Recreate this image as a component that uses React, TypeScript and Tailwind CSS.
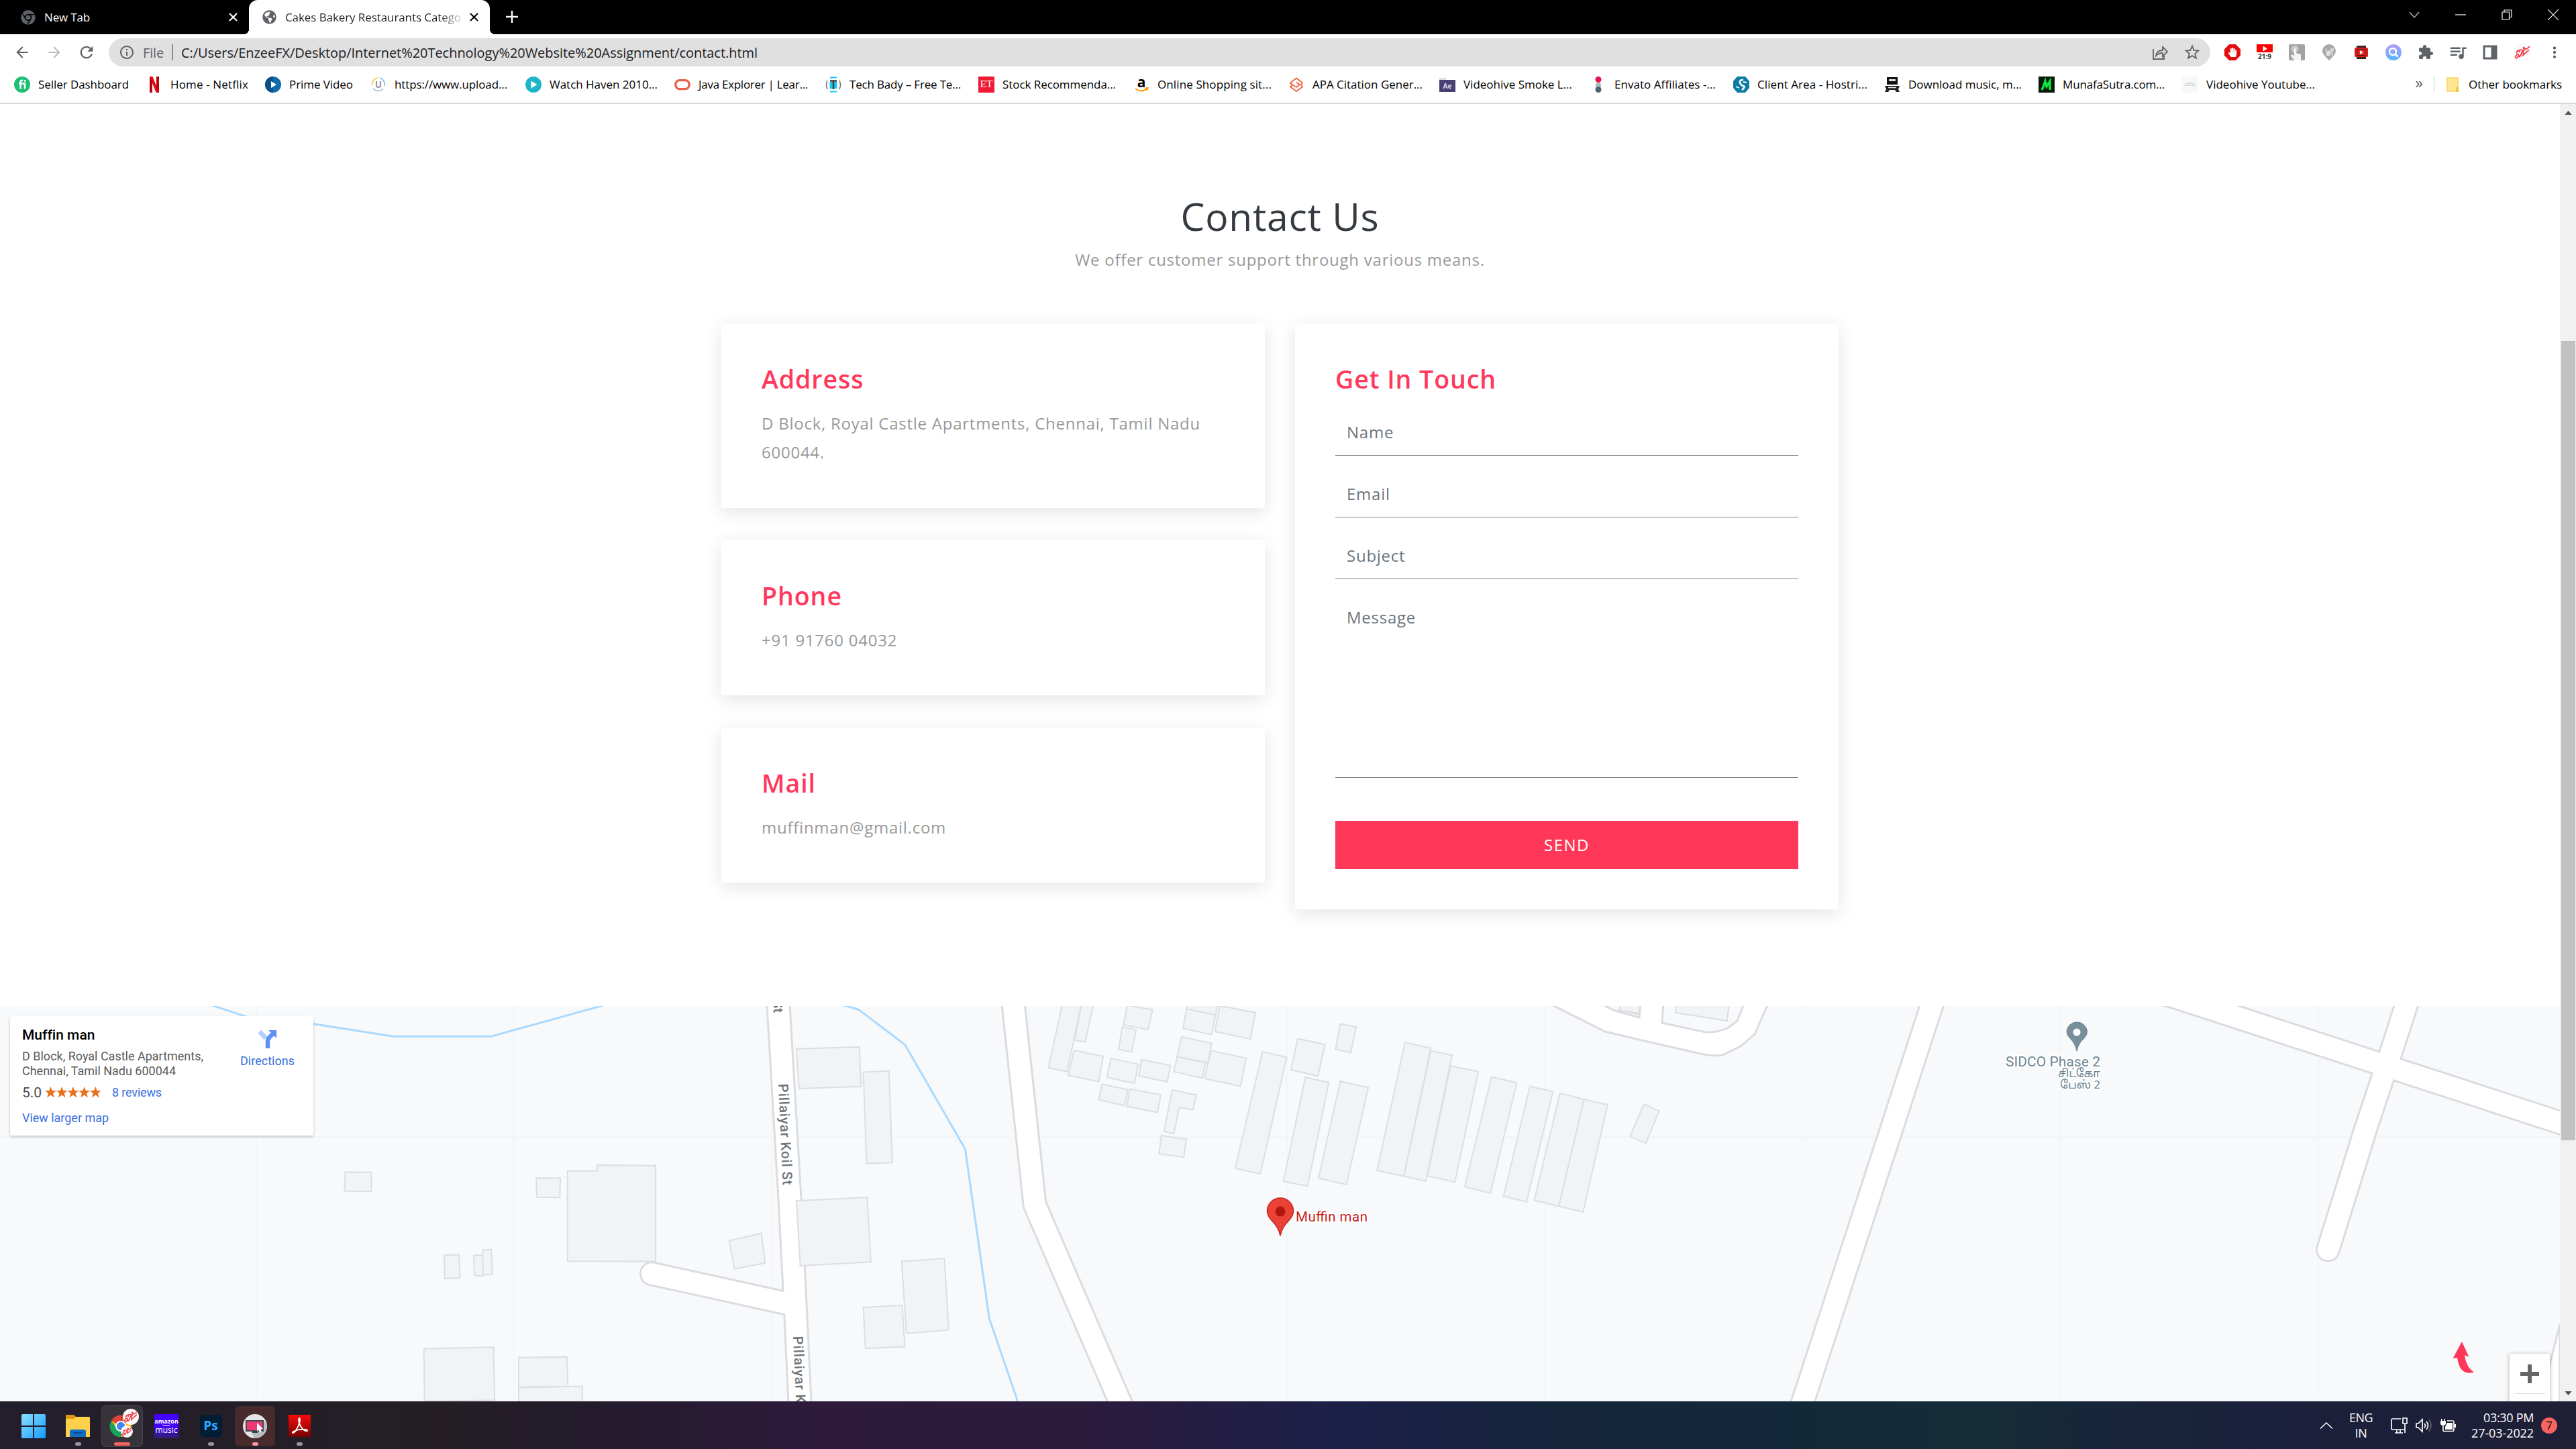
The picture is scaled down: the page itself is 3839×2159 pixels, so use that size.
import React, { useLayoutEffect, useRef } from "react";
import { FaCat, FaChrome, FaGlobeAmericas, FaHandPaper, FaPlay } from "react-icons/fa";
import { MdExtension, MdQueueMusic, MdStarBorder, MdInfoOutline, MdArrowBack, MdArrowForward, MdRefresh, MdMoreVert } from "react-icons/md";

const UI = "font-['Open_Sans',sans-serif]";

/* Text whose tracking is adjusted so that the run fills a given width. */
function Fit({ w, className = "", children }: { w: number; className?: string; children: string }) {
  const ref = useRef<HTMLSpanElement>(null);
  useLayoutEffect(() => {
    const el = ref.current;
    if (!el) return;
    el.style.letterSpacing = "0px";
    const natural = el.getBoundingClientRect().width;
    el.style.letterSpacing = `${(w - natural) / children.length}px`;
  }, [w, children]);
  return (
    <span ref={ref} className={`inline-block whitespace-nowrap ${className}`}>
      {children}
    </span>
  );
}

/* ---------- bookmark icons ---------- */

const Svg = ({ children }: { children: React.ReactNode }) => (
  <svg viewBox="0 0 24 24" className="size-6 shrink-0">{children}</svg>
);

const icons: Record<string, React.ReactNode> = {
  fi: (
    <Svg>
      <circle cx="12" cy="12" r="12" fill="#1dbf73" />
      <path d="M7 10.5h9v8M9.5 18.5V8.5q0-3 3.5-2.7" fill="none" stroke="#fff" strokeWidth="2.6" />
      <circle cx="16" cy="6.5" r="1.5" fill="#fff" />
    </Svg>
  ),
  netflix: (
    <Svg>
      <path d="M5 0h4v24l-4 0z" fill="#b1060f" />
      <path d="M15 0h4v24h-4z" fill="#b1060f" />
      <path d="M5 0h4.4L19 24h-4.4z" fill="#e50914" />
    </Svg>
  ),
  prime: (
    <Svg>
      <circle cx="12" cy="12" r="12" fill="#0f6cad" />
      <path d="M12 0a12 12 0 0 0 0 24z" fill="#0d4f8b" />
      <path d="M9 7l8 5-8 5z" fill="#fff" />
    </Svg>
  ),
  upload: (
    <Svg>
      <path d="M11 2a10 10 0 0 0-8.5 11" fill="none" stroke="#f4c542" strokeWidth="1.6" />
      <path d="M14 2a10 10 0 0 1 7 12" fill="none" stroke="#7fb2e5" strokeWidth="1.6" />
      <path d="M4 18a10 10 0 0 0 15 0" fill="none" stroke="#a5bdd6" strokeWidth="1.6" />
      <path d="M9 7v6q0 3 3 3t3-3V7" fill="none" stroke="#9a9a9a" strokeWidth="2.2" />
    </Svg>
  ),
  watch: (
    <Svg>
      <circle cx="12" cy="12" r="12" fill="#1fb5c9" />
      <path d="M8.5 6.5l9 5.5-9 5.5z" fill="#fff" />
    </Svg>
  ),
  java: (
    <Svg>
      <rect x="1.8" y="5.6" width="20.4" height="13" rx="6" fill="none" stroke="#e8604c" strokeWidth="3.4" />
    </Svg>
  ),
  tech: (
    <Svg>
      <path d="M7 1.500h10M7 22.500h10M7.500 9h3v8h-3zM13.500 9h3v8h-3z" stroke="#19c8f5" strokeWidth="2" fill="#19c8f5" />
      <path d="M7 6.500h10M12 6v13" stroke="#3d3d3d" strokeWidth="2.400" />
      <path d="M3 6q-3 6 0 13M21 6q3 6 0 13" fill="none" stroke="#777" strokeWidth="1.600" />
    </Svg>
  ),
  et: (
    <div className="flex size-6 shrink-0 items-center justify-center bg-[#ed1b34] font-['Liberation_Serif',serif] text-[15px] leading-none text-white">ET</div>
  ),
  amazon: (
    <span className="relative flex size-6 shrink-0 items-center justify-center">
      <span className="absolute inset-x-0 -top-[3px] text-center text-[21px] leading-[22px] font-bold text-black">a</span>
      <svg viewBox="0 0 24 24" className="absolute inset-0 size-6">
        <path d="M3 18q9 6.500 17 .5M17.500 17.500l4-.5-1 4" fill="none" stroke="#ff9900" strokeWidth="2" />
      </svg>
    </span>
  ),
  apa: (
    <Svg>
      <path d="M12 2.500l9 7-2 3 2 3-9 6.500-9-6.500 3-3-3-3z" fill="none" stroke="#f0613b" strokeWidth="1.800" strokeLinejoin="round" />
      <path d="M6 12l6 4 5-4-5-3.500" fill="none" stroke="#f0613b" strokeWidth="1.800" />
    </Svg>
  ),
  ae: (
    <div className="relative mt-1 flex h-[18px] w-6 shrink-0 items-center justify-center bg-[#4a4070] text-[10px] leading-none font-bold text-[#ddd7ee]">
      <span className="absolute -top-[3px] left-0 h-[3px] w-2.5 bg-[#dedee6]" />Ae
    </div>
  ),
  envato: (
    <Svg>
      <circle cx="12" cy="4.500" r="4.500" fill="#ea1150" />
      <circle cx="12" cy="13" r="4" fill="#a9b7be" />
      <circle cx="12" cy="19.500" r="4.500" fill="#4c6470" />
    </Svg>
  ),
  client: (
    <Svg>
      <path d="M6 0h12l6 7v10l-6 7H6l-6-7V7z" fill="#0d7ba3" />
      <path d="M15 5q-6 0-5 4t5 5-2 6" fill="none" stroke="#fff" strokeWidth="2.600" />
      <path d="M4 15l5 2M20 9l-5-1" stroke="#fff" strokeWidth="1.800" />
    </Svg>
  ),
  music: (
    <Svg>
      <path d="M4 1h16v11H4z" fill="#111" />
      <path d="M7 4h10v3H7z" fill="#ddd" />
      <path d="M1 14h22l-2 5 2 4h-5l-2-3H8l-2 3H1l2-4z" fill="#222" />
      <path d="M6 16.500h12" stroke="#eee" strokeWidth="1.500" />
    </Svg>
  ),
  munafa: (
    <Svg>
      <path d="M0 0h24v24H0z" fill="#071a09" />
      <path d="M5 20q2-4 5-13l2 8 5-8 0 13" fill="none" stroke="#15e53c" strokeWidth="3.400" />
    </Svg>
  ),
  blank: (
    <Svg>
      <path d="M0 0h24v24H0z" fill="#f8f8f8" />
      <path d="M6 10h12M3 13h18" stroke="#d2d2d2" strokeWidth="1.500" />
    </Svg>
  ),
};

const bookmarks: [string, string, number, string][] = [
  ["fi", "Seller Dashboard", 135, "w-[197px]"],
  ["netflix", "Home - Netflix", 116, "w-[177px]"],
  ["prime", "Prime Video", 95, "w-[157px]"],
  ["upload", "https://www.upload...", 168, "w-[231px]"],
  ["watch", "Watch Haven 2010...", 161, "w-[222px]"],
  ["java", "Java Explorer | Lear...", 163, "w-[225px]"],
  ["tech", "Tech Bady – Free Te...", 166, "w-[228px]"],
  ["et", "Stock Recommenda...", 169, "w-[231px]"],
  ["amazon", "Online Shopping sit...", 170, "w-[231px]"],
  ["apa", "APA Citation Gener...", 164, "w-[225px]"],
  ["ae", "Videohive Smoke L...", 162, "w-[225px]"],
  ["envato", "Envato Affiliates -...", 151, "w-[213px]"],
  ["client", "Client Area - Hostri...", 164, "w-[225px]"],
  ["music", "Download music, m...", 169, "w-[230px]"],
  ["munafa", "MunafaSutra.com...", 152, "w-[214px]"],
  ["blank", "Videohive Youtube...", 162, "w-[220px]"],
];

function TabClose({ className }: { className: string }) {
  return (
    <svg viewBox="0 0 14 14" className={`size-[13px] shrink-0 ${className}`}>
      <path d="M1 1l12 12M13 1L1 13" stroke="currentColor" strokeWidth="2.200" />
    </svg>
  );
}

function TabStrip() {
  return (
    <div className="flex h-[51px] shrink-0 bg-black text-[17px]">
      <div className="flex w-[371px] items-center pl-[31px] text-white">
        <FaChrome className="size-[22px] text-[#5f6368]" />
        <Fit w={68} className="ml-[13px]">New Tab</Fit>
        <TabClose className="ml-[207px] text-white" />
      </div>
      <div className="relative flex w-[359px] items-center rounded-t-[13px] bg-white pl-5 text-black">
        <span className="absolute bottom-0 -left-2 h-2 w-2 bg-[radial-gradient(circle_at_0_0,black_8px,white_8px)]" />
        <span className="absolute -right-2 bottom-0 h-2 w-2 bg-[radial-gradient(circle_at_100%_0,black_8px,white_8px)]" />
        <FaGlobeAmericas className="size-[21px] shrink-0 text-[#5f6368]" />
        <Fit w={262} className="ml-[13px] bg-[linear-gradient(90deg,#202124_88%,#d8d8d8_100%)] bg-clip-text text-transparent">Cakes Bakery Restaurants Catego</Fit>
        <TabClose className="ml-[13px] text-black" />
      </div>
      <svg viewBox="0 0 18 18" className="mt-4 ml-6 size-[18px]">
        <path d="M9 0v18M0 9h18" stroke="#fff" strokeWidth="2.400" />
      </svg>
      <div className="mr-[26px] ml-auto flex h-[43px] items-center gap-[53px] text-white">
        <svg viewBox="0 0 16 16" className="size-4"><path d="M1 4l7 8 7-8" fill="none" stroke="#bbb" strokeWidth="1.200" /></svg>
        <svg viewBox="0 0 16 16" className="size-4"><path d="M0 8h16" stroke="#fff" strokeWidth="1.200" /></svg>
        <svg viewBox="0 0 16 16" className="size-4"><path d="M1 4h10.500v11H1zM4 4V1h11v10.500h-3.500" fill="none" stroke="#fff" strokeWidth="1.200" /></svg>
        <svg viewBox="0 0 16 16" className="size-4"><path d="M0 0l16 16M16 0L0 16" stroke="#fff" strokeWidth="1.200" /></svg>
      </div>
    </div>
  );
}

function Signature({ className }: { className: string }) {
  return (
    <svg viewBox="0 0 24 24" className={className}>
      <circle cx="12" cy="12" r="12" fill="#fbf9f9" />
      <path d="M4 13q3-7 4-1 0-5 4-3t2-2 3 1l5-4M2 19q4-8 5-3t4-3 2 3l4-4 4-3M3 21l5-5" fill="none" stroke="#f0383f" strokeWidth="1.600" />
    </svg>
  );
}

function Toolbar() {
  return (
    <div className="flex h-[54px] shrink-0 items-center text-[#5f6368]">
      <MdArrowBack className="ml-[20px] size-[26px]" />
      <MdArrowForward className="ml-[22px] size-[26px] text-[#bdbdbd]" />
      <MdRefresh className="ml-[21px] size-[28px]" />
      <div className="ml-[19px] flex h-[42px] w-[3132px] items-center rounded-full bg-[#e0e0e0] text-[20px]">
        <MdInfoOutline className="ml-[15px] size-[24px]" />
        <Fit w={31} className="ml-[12px] pt-[2px]">File</Fit>
        <span className="mx-[12px] h-6 w-[2px] bg-[#8b8b8b]" />
        <Fit w={859} className="pt-[2px] text-[#202124]">C:/Users/EnzeeFX/Desktop/Internet%20Technology%20Website%20Assignment/contact.html</Fit>
        <svg viewBox="0 0 24 24" className="mr-px ml-auto size-6">
          <path d="M2 7v15h16v-5M6 17q1-8 10-8V4l7 7-7 7v-5q-6 0-10 4z" fill="none" stroke="#5f6368" strokeWidth="1.800" />
        </svg>
        <MdStarBorder className="mr-[13px] ml-[21px] size-[28px]" />
      </div>
      <div className="ml-[21px] flex items-center gap-6">
        <span className="flex size-6 items-center justify-center bg-[#e40d0d] text-[14px] text-white [clip-path:polygon(30%_0,70%_0,100%_30%,100%_70%,70%_100%,30%_100%,0_70%,0_30%)]"><FaHandPaper /></span>
        <span className="flex h-6 w-6 flex-col items-center">
          <span className="flex h-3 w-6 items-center justify-center bg-[#f00] text-[7px] text-white"><FaPlay /></span>
          <span className="text-[10px] leading-3 font-bold text-[#333]">21:9</span>
        </span>
        <svg viewBox="0 0 24 24" className="size-6">
          <rect width="24" height="24" rx="2" fill="#a2a2a2" />
          <circle cx="9" cy="7" r="5.500" fill="#c9c9c9" />
          <path d="M8 7q2-2 3 0v6l7 2v9H8l-5-7 1-2 4 2z" fill="#eef4f8" />
        </svg>
        <span className="relative flex size-6 justify-center">
          <svg viewBox="0 0 24 24" className="absolute inset-0 size-6"><path d="M12 24q-10-9-10-14a10 10 0 0 1 20 0q0 5-10 14z" fill="#a8a8a8" /></svg>
          <FaCat className="relative mt-[4px] size-[13px] text-[#e0e0e0]" />
        </span>
        <svg viewBox="0 0 24 24" className="size-6">
          <path d="M5 2h14v20H5z" fill="#3a2522" />
          <rect x="2" y="5" width="20" height="14" rx="2" fill="#d91c1c" />
          <path d="M6 7.500h12v9H6z" fill="#e22" stroke="#5a1212" />
          <path d="M10 9l5 3-5 3z" fill="#fff" />
        </svg>
        <svg viewBox="0 0 24 24" className="size-6">
          <defs><linearGradient id="q" x2="0" y2="1"><stop stopColor="#b49cf7" /><stop offset="1" stopColor="#57b5ff" /></linearGradient></defs>
          <circle cx="12" cy="12" r="12" fill="url(#q)" />
          <circle cx="11" cy="11" r="5" fill="none" stroke="#fff" strokeWidth="2.400" />
          <path d="M14.500 14.500l4 4" stroke="#fff" strokeWidth="2.600" />
        </svg>
        <MdExtension className="size-6" />
        <MdQueueMusic className="size-6 scale-125" />
        <svg viewBox="0 0 24 24" className="size-6"><path d="M3 3h18v18H3zM15 3v18M17 3v18M19 3v18" fill="none" stroke="#5f6368" strokeWidth="3" /></svg>
        <Signature className="size-6 scale-110" />
        <MdMoreVert className="size-6 scale-110" />
      </div>
    </div>
  );
}

function BookmarkBar() {
  return (
    <div className="flex h-[50px] shrink-0 items-center border-b-2 border-[#dadada] pb-[7px] pl-[21px] text-[17px] text-black">
      {bookmarks.map(([icon, label, w, cls]) => (
        <div key={label} className={`flex shrink-0 items-center gap-3 ${cls}`}>
          {icons[icon]}
          <Fit w={w}>{label}</Fit>
        </div>
      ))}
      <svg viewBox="0 0 12 10" className="ml-[128px] h-[9px] w-[11px]"><path d="M1 0l4 5-4 5M6 0l4 5-4 5" fill="none" stroke="#5f6368" strokeWidth="2" /></svg>
      <span className="ml-4 h-6 w-px bg-[#c8c8c8]" />
      <svg viewBox="0 0 18 24" className="ml-[18px] h-6 w-[18px]"><path d="M1 2h16v20H1z" fill="#ffe694" stroke="#f7d55c" strokeWidth="1.500" /><path d="M14 23v-7h4v7z" fill="#f2c53a" /></svg>
      <Fit w={139} className="ml-[15px]">Other bookmarks</Fit>
    </div>
  );
}

/* ---------- page ---------- */

function Card({ title, children, className = "" }: { title: string; children: React.ReactNode; className?: string }) {
  return (
    <section className={`w-[810px] bg-white px-[60px] pt-[60px] shadow-[0_6px_26px_rgba(0,0,0,0.11)] ${className}`}>
      <h4 className="text-[37.5px] leading-[45px] font-semibold tracking-[0.95px] text-[#ff385c]">{title}</h4>
      {children}
    </section>
  );
}

function Contact() {
  const p = "text-[24px] leading-[43.2px] tracking-[0.75px] text-[#999]";
  const field = "block w-full border-b border-[#808080] px-[17px] text-[24px] tracking-[0.75px] outline-none placeholder:text-[#6c757d] placeholder:opacity-100";
  return (
    <main className="flex h-[1344px] shrink-0 flex-col items-center bg-white pt-[131px]">
      <h1 className="text-[57px] leading-[72px] tracking-[0.75px] text-[#343a40]">Contact Us</h1>
      <p className={`mt-[7px] ${p}`}>We offer customer support through various means.</p>
      <div className="mt-[74px] flex w-[1665px] items-start justify-between">
        <div className="flex flex-col gap-12">
          <Card title="Address" className="pb-[61px]"><p className={`mt-[22px] ${p}`}>D Block, Royal Castle Apartments, Chennai, Tamil Nadu 600044.</p></Card>
          <Card title="Phone" className="pb-[61px]"><p className={`mt-[22px] ${p}`}>+91 91760 04032</p></Card>
          <Card title="Mail" className="pb-[61px]"><p className={`mt-[22px] ${p}`}>muffinman@gmail.com</p></Card>
        </div>
        <Card title="Get In Touch" className="h-[873px]">
          <form className="mt-6 flex flex-col">
            <input placeholder="Name" className={`mb-6 h-[68px] pb-[2px] ${field}`} />
            <input placeholder="Email" className={`mb-6 h-[68px] pb-[2px] ${field}`} />
            <input placeholder="Subject" className={`mb-6 h-[68px] pb-[2px] ${field}`} />
            <textarea placeholder="Message" className={`h-[272px] resize-none pt-[15px] ${field}`} />
            <button type="button" className="mt-16 h-[72px] bg-[#ff385a] text-[24px] tracking-[1.5px] text-white">SEND</button>
          </form>
        </Card>
      </div>
    </main>
  );
}

/* ---------- map ---------- */

const west = [
  "1454,190 1569,183 1572,337 1459,345", "630,670 678,671 678,745 629,744", "979,693 1023,694 1022,769 980,768",
  "1036,665 1090,665 1090,643 1197,645 1197,1018 1036,1017", "1331,937 1390,909 1397,1024 1341,1047",
  "811,994 838,992 840,1082 812,1085", "865,994 882,994 882,1075 866,1073", "881,973 897,971 899,1069 882,1070",
  "774,1358 901,1352 903,1558 775,1563", "947,1392 1035,1390 1037,1505 947,1507", "947,1509 1063,1504 1063,1580 947,1580",
  "1454,782 1583,768 1590,1020 1461,1035",
];
const middle = [
  "8,281 55,276 61,633 14,637", "78,1018 156,1006 164,1285 87,1298", "8,1197 79,1189 84,1350 12,1357",
  "372,10 407,10 380,279 346,264", "407,10 429,10 413,164 394,156", "490,20 536,38 528,116 483,96",
  "481,104 506,116 498,203 474,192", "393,196 446,219 438,318 382,293", "460,227 510,250 503,324 453,302",
  "516,232 569,255 563,319 511,295", "600,10 656,10 651,58 598,35", "598,35 651,58 644,135 592,110",
  "659,22 724,49 715,152 650,123", "589,143 644,169 637,245 581,221", "581,221 633,244 627,304 575,279",
  "643,197 707,226 697,336 631,306", "444,328 491,349 485,411 438,389", "495,346 551,369 545,438 489,414",
  "572,350 616,370 610,428 585,418 575,520 557,512", "552,528 598,542 593,612 548,599", "737,202 781,223 733,677 687,655",
  "801,150 851,173 838,296 789,272", "879,93 908,105 898,205 870,192", "815,301 858,321 819,725 775,706",
  "879,316 930,341 890,719 839,694", "997,165 1044,187 995,686 946,664", "1044,197 1083,215 1035,706 995,686",
  "1080,257 1131,279 1088,709 1038,685", "1155,299 1201,322 1153,752 1106,727", "1225,336 1267,356 1219,786 1177,764",
  "1280,363 1324,387 1278,803 1233,780", "1324,387 1367,408 1322,826 1278,803", "1433,406 1461,431 1437,557 1408,532",
];

const W = "translate(0,-9) scale(.8163,.38265)";
const M = "translate(1280,-9) scale(.8163,.38265)";
const E = "translate(2560,-9) scale(.8157,.38265)";

const roads: [string, string][] = [
  [W, "1420,-20L1442,780L1451,1150L1461,1600"],
  [W, "1190,1066L1451,1188"],
  [M, "280,-20L321,797L484,1600"],
  [E, "397,-20L150,1600"],
  [E, "820,-22L1600,520"],
  [E, "1264,-20L1223,250L1184,500L1115,972"],
];

const Roads = ({ color, width }: { color: string; width: number }) => (
  <>
    {roads.map(([t, d]) => (
      <path key={d} transform={t} d={`M${d}`} fill="none" stroke={color} strokeWidth={width} strokeLinecap="round" strokeLinejoin="round" vectorEffect="non-scaling-stroke" />
    ))}
  </>
);

const Blocks = ({ list, t }: { list: string[]; t: string }) => (
  <g transform={t} fill="#f1f3f4" stroke="#dcdee1" strokeWidth="2">
    {list.map((pts) => <polygon key={pts} points={pts} vectorEffect="non-scaling-stroke" />)}
  </g>
);

function MapCanvas() {
  return (
    <svg viewBox="0 0 3815 589" className="block h-[589px] w-[3815px]">
      <rect width="3815" height="589" fill="#f8f9fb" />
      <path d="M382 0v589M766 0v589M1150 0v589M1534 0v589M1918 0v589M2302 0v589M2686 0v589M3070 0v589M3455 0v589M0 195h3815M0 579h3815" stroke="#f2f4f5" strokeWidth="1.500" />
      <g fill="none" stroke="#aadaff" strokeWidth="3">
        <path transform={W} d="M386,20L450,65L572,93L718,142L896,142L1100,22M1540,20L1568,38" vectorEffect="non-scaling-stroke" />
        <path transform={M} d="M-28,20L0,38L84,174L194,580L238,1240L296,1600" vectorEffect="non-scaling-stroke" />
      </g>
      <path d="M3815 474L3801 529L3788 600H3815z" fill="#fff" stroke="#dadce0" strokeWidth="3" />
      <Blocks list={middle} t={M} />
      <g fill="#f1f3f4" stroke="#dcdee1" strokeWidth="2">
        <path d="M2416-5L2413 6L2460 14L2463-5zM2498-5L2497 10L2574 22L2577-5z" />
      </g>
      <Roads color="#dadce0" width={37} />
      <path d="M2304-6L2392 38L2455 53L2539 72Q2556 75 2567 73L2594 60L2615 42L2636-6H2600L2589 22L2576 32Q2560 40 2542 39L2477 25L2479-6H2445L2443 17L2407 7L2380-6Z" fill="#fff" stroke="#dadce0" strokeWidth="3" />
      <path d="M2416-5L2413 6L2443 13" fill="none" stroke="#dcdee1" strokeWidth="2" />
      <Roads color="#fff" width={31} />
      <Blocks list={west} t={W} />
      <g className="font-['Roboto',sans-serif]" fontSize="20.500" fontWeight="500" fill="#70757a" stroke="#fff" strokeWidth="3" paintOrder="stroke">
        <text transform="translate(1160,116) rotate(87.5)" textLength="151">Pillaiyar Koil St</text>
        <text transform="translate(1182,492) rotate(87.5)" textLength="151">Pillaiyar Koil St</text>
        <text transform="translate(1152,-9) rotate(87.5)">St</text>
      </g>
      <path d="M1908 342Q1905.500 330 1896.500 321Q1888.500 313 1888.500 305.500A19.500 19.500 0 0 1 1927.500 305.500Q1927.500 313 1919.500 321Q1910.500 330 1908 342z" fill="#ea4335" stroke="#c5221f" strokeWidth="1.500" />
      <circle cx="1908" cy="306" r="7.500" fill="#b31412" />
      <g className="font-['Roboto',sans-serif]" stroke="#fff" strokeWidth="4" paintOrder="stroke">
        <text x="1931" y="321" fontSize="20.500" textLength="107" fill="#c5221f">Muffin man</text>
        <text x="2989" y="90" fontSize="21" textLength="141" fill="#6b8591">SIDCO Phase 2</text>
        <g fontSize="17" textAnchor="end" fill="#6b8591" className="font-['Noto_Sans_Tamil','Noto_Sans',sans-serif]">
          <text x="3130" y="106" textLength="63" lengthAdjust="spacingAndGlyphs">சிட்கோ</text>
          <text x="3130" y="123" textLength="60" lengthAdjust="spacingAndGlyphs">பேஸ் 2</text>
        </g>
      </g>
      <path d="M3095 67Q3093 56 3085 48Q3080 43 3080 38A15.300 15.300 0 0 1 3110.500 38Q3110.500 43 3105 49Q3097 56 3095 67z" fill="#78909c" stroke="#5f7b88" />
      <circle cx="3095" cy="39" r="5.500" fill="#fff" />
      <path d="M3669 500L3679.500 523L3673 520Q3675 538 3687 545.500Q3666 552 3662 524L3655.500 525Z" fill="#ff385a" />
    </svg>
  );
}

function MapSection() {
  return (
    <div className="relative h-[589px] overflow-hidden font-['Roboto',sans-serif]">
      <MapCanvas />
      <div className="absolute top-[15px] left-[15px] flex h-[178px] w-[452px] justify-between rounded-[3px] bg-white pt-[15px] pr-[28px] pl-[18px] shadow-[0_2px_4px_rgba(0,0,0,0.2)]">
        <div className="flex flex-col items-start text-[18px] leading-[22px] text-[#5b5b5b]">
          <Fit w={107} className="mb-[8px] text-[21px] leading-[26px] font-medium text-black">Muffin man</Fit>
          <Fit w={270}>D Block, Royal Castle Apartments,</Fit>
          <Fit w={229}>Chennai, Tamil Nadu 600044</Fit>
          <div className="mt-[10px] flex items-center">
            <Fit w={29} className="mr-[5px] text-[21px] text-[#4d4d4d]">5.0</Fit>
            <svg viewBox="0 0 84 18" className="h-[18px] w-[84px]">
              {[0, 1, 2, 3, 4].map((i) => (
                <path key={i} transform={`translate(${i * 16.7},0)`} d="M8.500 0l2.200 6h6.300l-5 4 1.900 6.500-5.400-4-5.400 4L5 10 0 6h6.300z" fill="#e7711b" />
              ))}
            </svg>
            <Fit w={74} className="ml-[16px] text-[#3a70dd]">8 reviews</Fit>
          </div>
          <Fit w={129} className="mt-[16px] text-[#3a70dd]">View larger map</Fit>
        </div>
        <div className="flex flex-col items-center pt-[5px]">
          <svg viewBox="0 0 28 28" className="size-7">
            <path d="M2 3l9 10" stroke="#b5cdfd" strokeWidth="7" />
            <path d="M14 28V17q0-3 3-6l6-6" fill="none" stroke="#5e8ff5" strokeWidth="6.500" />
            <path d="M15 1h12v12z" fill="#5e8ff5" />
          </svg>
          <Fit w={81} className="mt-2 text-[18px] leading-[22px] text-[#3a70dd]">Directions</Fit>
        </div>
      </div>
      <div className="absolute top-[518px] left-[3740px] flex h-[90px] w-[60px] flex-col items-center rounded-[3px] bg-white shadow-[0_1px_6px_rgba(0,0,0,0.3)]">
        <svg viewBox="0 0 28 28" className="mt-4 size-7"><path d="M14 0v28M0 14h28" stroke="#666" strokeWidth="6" /></svg>
        <span className="mt-[15px] h-px w-[45px] bg-[#dedede]" />
      </div>
    </div>
  );
}

function Scrollbar() {
  return (
    <div className="flex w-6 shrink-0 flex-col items-center bg-[#f1f1f1]">
      <svg viewBox="0 0 12 7" className="mt-[10px] h-[6px] w-[11px]"><path d="M6 0l6 7H0z" fill="#505050" /></svg>
      <div className="mt-[337px] h-[1191px] w-[21px] bg-[#c1c1c1]" />
      <svg viewBox="0 0 12 7" className="mt-auto mb-[9px] h-[6px] w-[11px]"><path d="M6 7l6-7H0z" fill="#505050" /></svg>
    </div>
  );
}

/* ---------- taskbar ---------- */

function Slot({ children, mark = "", className = "" }: { children: React.ReactNode; mark?: string; className?: string }) {
  return (
    <div className={`flex h-[60px] w-[60px] shrink-0 flex-col items-center rounded-md ${className}`}>
      <div className="flex h-[54px] items-center justify-center pt-[6px]">{children}</div>
      {mark && <span className={`h-[5px] rounded-full ${mark}`} />}
    </div>
  );
}

function Taskbar() {
  return (
    <div className="flex h-[71px] shrink-0 items-center bg-[linear-gradient(90deg,#231e2c_0%,#241e24_17%,#231b2c_23%,#2d1a3c_32%,#2b1b3d_42%,#1c2048_52%,#15253c_60%,#12293a_70%,#152d38_77%,#17263a_81%,#1b203c_88%,#1f1f36_100%)] text-white">
      <div className="flex items-center gap-[6px] pt-[2px] pl-5">
        <Slot>
          <svg viewBox="0 0 36 36" className="size-[36px]">
            <defs><linearGradient id="win" x2="1" y2="1"><stop stopColor="#8be2ff" /><stop offset="1" stopColor="#159bfd" /></linearGradient></defs>
            <path d="M2 0h15v17H0V2q0-2 2-2zM19 0h15q2 0 2 2v15H19zM0 19h17v17H2q-2 0-2-2zM19 19h17v15q0 2-2 2H19z" fill="url(#win)" />
          </svg>
        </Slot>
        <Slot mark="w-[9px] bg-[#9c979d]">
          <svg viewBox="0 0 36 34" className="h-[34px] w-[36px]">
            <path d="M0 1q0-1 1-1h11l3 3v8H0z" fill="#dd9a0e" />
            <path d="M0 6h12l3-3h20q1 0 1 1v29H0z" fill="#ffd04b" />
            <path d="M6 33V25q0-3 3-3h18q3 0 3 3v8z" fill="#1170c4" />
            <path d="M11 27h14" stroke="#0a3f74" strokeWidth="1.500" />
          </svg>
        </Slot>
        <Slot mark="w-6 bg-[#f5655f]" className="bg-[#37333a] ring-1 ring-[#47434a]">
          <div className="relative size-[38px]">
            <svg viewBox="0 0 36 36" className="absolute top-[2px] left-0 size-[34px]">
              <circle cx="18" cy="18" r="17" fill="#fbc116" />
              <path d="M18 18L3 9.500A17 17 0 0 1 33 9.500L18 10z" fill="#dc4437" />
              <path d="M3 9.500A17 17 0 0 0 18 35L25 22 11 21z" fill="#16a15d" />
              <circle cx="18" cy="18" r="8.500" fill="#fff" /><circle cx="18" cy="18" r="6.500" fill="#4486f4" />
            </svg>
            <Signature className="absolute -top-[7px] left-[20px] size-6" />
            <Signature className="absolute top-[18px] left-[17px] size-[18px]" />
          </div>
        </Slot>
        <Slot>
          <div className="flex h-[36px] w-[36px] flex-col items-center justify-center bg-[linear-gradient(#4400ff_50%,#2d1f70)] text-white">
            <span className="text-[9px] leading-[9px] font-bold">amazon</span>
            <span className="h-[2px] w-3 rounded-b-full border-b border-white" />
            <span className="text-[12px] leading-[13px]">music</span>
          </div>
        </Slot>
        <Slot mark="w-[9px] bg-[#9c979d]">
          <div className="flex size-[33px] items-center justify-center rounded-[6px] bg-[#001e36] text-[19px] font-bold text-[#31a8ff]">Ps</div>
        </Slot>
        <Slot mark="w-[9px] bg-[#ff97a3]" className="bg-[#462a2c]">
          <svg viewBox="0 0 36 36" className="size-[36px]">
            <circle cx="18" cy="18" r="18" fill="#e3e5e8" />
            <path d="M31 10l4 4a18 18 0 0 1-18 22l-4-9z" fill="#b5bbbf" />
            <path d="M4 9h27v17H4z" fill="#424a50" /><path d="M6 11h23v13H6z" fill="#ee3a70" />
            <path d="M14 25h8v3H14z" fill="#383f45" />
            <path d="M21 13l9 9-4 .5 2 4-2.500 1-2-4-2.500 2z" fill="#fff" />
          </svg>
        </Slot>
        <Slot mark="w-[9px] bg-[#9c979d]">
          <svg viewBox="0 0 33 33" className="size-[33px]">
            <defs><linearGradient id="pdf" x2="0" y2="1"><stop stopColor="#f90a0a" /><stop offset="1" stopColor="#750404" /></linearGradient></defs>
            <path d="M0 0h33v33H0z" fill="url(#pdf)" />
            <path d="M16 5q-3 2 2 12 6 9 10 7 1-3-12-2-12 3-10 5 3 1 8-9 5-12 2-13z" fill="none" stroke="#fff" strokeWidth="1.800" />
          </svg>
        </Slot>
      </div>
      <div className="ml-auto flex items-center pt-px pr-[28px] text-[18px] leading-[23px]">
        <svg viewBox="0 0 18 10" className="h-[10px] w-[18px]"><path d="M0 9.500L9 1l9 8.500" fill="none" stroke="#fff" strokeWidth="1.500" /></svg>
        <div className="ml-[25px] flex flex-col items-center"><Fit w={35}>ENG</Fit><Fit w={18}>IN</Fit></div>
        <svg viewBox="0 0 26 24" className="ml-[27px] h-6 w-[26px]">
          <path d="M15 2H3Q1 2 1 4v12q0 2 2 2h17M6 23h12M9 19v4M14 19v4M18 1h6v8h-6zM21 9v14" fill="none" stroke="#fff" strokeWidth="1.700" />
        </svg>
        <svg viewBox="0 0 24 22" className="ml-[11px] h-[22px] w-6">
          <path d="M1 8h3l6-6v18l-6-6H1zM13 8q3 3 0 6.500M16 5q5 6 0 12" fill="none" stroke="#fff" strokeWidth="1.700" />
          <path d="M20 2.500q6 8 0 17" fill="none" stroke="#62657e" strokeWidth="1.700" />
        </svg>
        <svg viewBox="0 0 24 20" className="ml-[12px] h-5 w-6">
          <path d="M1 3h8v4q0 3-4 3t-4-3zM2 0h1.500v3H2zM6.500 0H8v3H6.500z" fill="#fff" />
          <path d="M5 10v7q0 1.500 2 1.500h12q2 0 2-2V5q0-2-2-2h-8" fill="none" stroke="#fff" strokeWidth="1.600" />
          <path d="M8 12l3-6h8v10H8zM22 8h2v5h-2z" fill="#fff" />
        </svg>
        <div className="ml-[23px] flex flex-col items-end"><Fit w={75}>03:30 PM</Fit><Fit w={93}>27-03-2022</Fit></div>
        <span className="ml-[11px] flex size-6 items-center justify-center rounded-full bg-[#f8655f] text-[16px] text-black">7</span>
      </div>
    </div>
  );
}

export default function App() {
  return (
    <div className={`flex h-[2159px] w-[3839px] flex-col overflow-hidden bg-white ${UI}`}>
      <TabStrip />
      <Toolbar />
      <BookmarkBar />
      <div className="flex h-[1933px] shrink-0">
        <div className="w-[3815px] shrink-0">
          <Contact />
          <MapSection />
        </div>
        <Scrollbar />
      </div>
      <Taskbar />
    </div>
  );
}
